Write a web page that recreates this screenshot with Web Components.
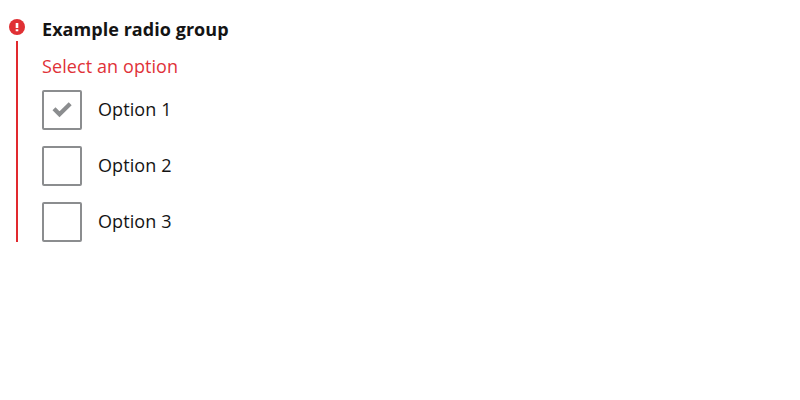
<!DOCTYPE html>
<html lang="en"><head><meta charset="utf-8"><title>Radio group</title>
<style>body{margin:0;background:#fff;color:#141414;font:18px/28px "Open Sans","Noto Sans",sans-serif;letter-spacing:.09px}</style></head><body>
<radio-group heading="Example radio group" error="Select an option">
<radio-option checked>Option 1</radio-option><radio-option>Option 2</radio-option><radio-option>Option 3</radio-option>
</radio-group>
<script>
class RadioOption extends HTMLElement{
constructor(){super();this.attachShadow({mode:"open"}).innerHTML=`<style>
:host{display:flex;align-items:center;gap:16px;height:40px}
.box{box-sizing:border-box;width:40px;height:40px;border:2px solid #8b8d8f;border-radius:2px;background:#fff;display:flex;align-items:center;justify-content:center}
svg{display:none}:host([checked]) svg{display:block}
.label{margin-top:-2px}
</style><span class="box"><svg width="20" height="16" viewBox="0 0 20 16"><path d="M2 6.8 7.5 12.3 18.2 1.8" fill="none" stroke="#8b8d8f" stroke-width="4.2"/></svg></span><span class="label"><slot></slot></span>`}}
class ErrorRail extends HTMLElement{
constructor(){super();this.attachShadow({mode:"open"}).innerHTML=`<style>
:host{display:flex;flex-direction:column;align-items:center;width:16px;gap:6px}
svg{display:block;flex:none}.line{width:2px;flex:1;background:#e1292e}
</style><svg width="16" height="16" viewBox="0 0 16 16"><circle cx="8" cy="8" r="8" fill="#e03034"/><path d="M8 4v5M8 10.2v2" stroke="#fff" stroke-width="2.6"/></svg><span class="line"></span>`}}
class RadioGroup extends HTMLElement{
constructor(){super();this.attachShadow({mode:"open"}).innerHTML=`<style>
:host{display:flex;gap:17px;padding:15px 0 0 9px}
error-rail{margin-top:4px}
.title{font-weight:700;letter-spacing:.05px}.error{color:#e03238;margin-top:9px}
.options{display:grid;gap:16px;margin-top:10px}
</style><error-rail></error-rail><div><div class="title"></div><div class="error"></div><div class="options"><slot></slot></div></div>`}
connectedCallback(){this.shadowRoot.querySelector(".title").textContent=this.getAttribute("heading");this.shadowRoot.querySelector(".error").textContent=this.getAttribute("error")}}
customElements.define("radio-option",RadioOption);customElements.define("error-rail",ErrorRail);customElements.define("radio-group",RadioGroup);
</script></body></html>
